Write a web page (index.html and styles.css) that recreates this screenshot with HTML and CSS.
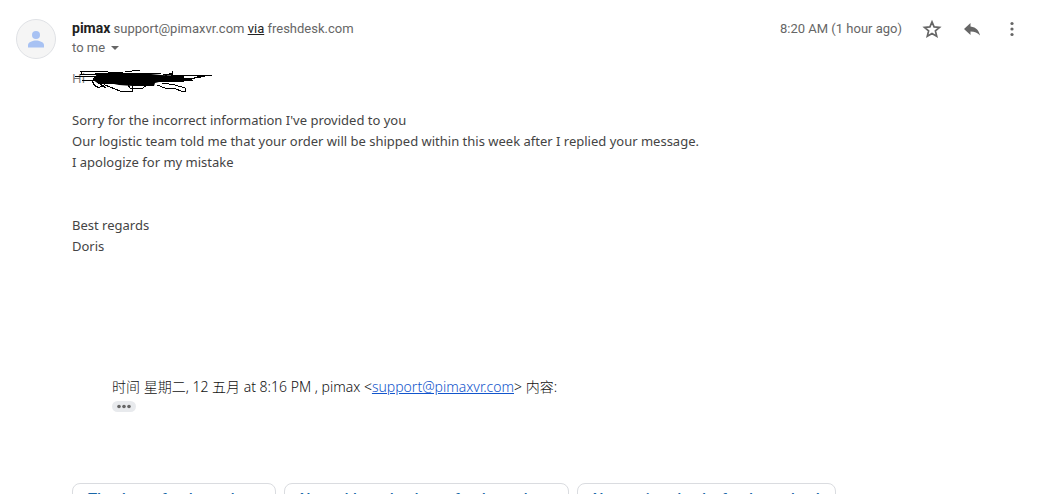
FILE: index.html
```html
<!DOCTYPE html>
<html lang="en">
<head>
<meta charset="utf-8">
<title>Message from pimax</title>
<link rel="stylesheet" href="styles.css">
</head>
<body>
<article class="message">
  <svg class="avatar" viewBox="0 0 40 40" aria-hidden="true">
    <circle cx="20" cy="20" r="19.5" fill="#f5f5f5" stroke="#dfe1e5"/>
    <circle cx="20" cy="16" r="4" fill="#a8c2f3"/>
    <path d="M12 28.500v-2.500c0-3 5-4.500 8-4.500s8 1.500 8 4.500v2.500z" fill="#a8c2f3"/>
  </svg>
  <div class="content">
    <header class="header">
      <div class="sender">
        <p class="from"><strong class="name">pimax</strong> support@pimaxvr.com <a class="via" href="#via">via</a> freshdesk.com</p>
        <button class="recipients" type="button">to me
          <svg class="caret" viewBox="0 0 8 4" aria-hidden="true"><path d="M0 0h8L4 4z"/></svg>
        </button>
      </div>
      <time class="time">8:20 AM (1 hour ago)</time>
      <div class="actions">
        <button class="action" type="button" aria-label="Star">
          <svg viewBox="0 0 20 20"><path d="M10 2.900l2.100 5 5.400.5-4.100 3.500 1.300 5.300-4.700-2.800-4.700 2.800 1.300-5.300-4.100-3.500 5.400-.5z" fill="none" stroke="#666" stroke-width="1.700"/></svg>
        </button>
        <button class="action" type="button" aria-label="Reply">
          <svg viewBox="0 0 20 20"><path d="M8.500 7.500V4L2 10l6.500 6v-3.600c4.200 0 7.200 1.200 9.500 4-1-4.500-3.500-8.200-9.500-8.900z"/></svg>
        </button>
        <button class="action" type="button" aria-label="More">
          <svg viewBox="0 0 20 20"><circle cx="10" cy="4.500" r="1.600"/><circle cx="10" cy="10" r="1.600"/><circle cx="10" cy="15.500" r="1.600"/></svg>
        </button>
      </div>
    </header>
    <div class="body">
      <p class="greeting">Hi
        <svg class="scribble" viewBox="0 0 140 24" aria-hidden="true">
          <path d="M24 5l20-1h24l20 2 23 1v5l-12 1-9-1-8 2-1 3H60l-14-1-5-1H26l-6-4z" fill="#000"/>
          <path d="M7 2.500h20l30 2M2 7.500h24M9 11.500h20M7 5.500h70M8 1.500v3M22 4.500h66M52 2.500l15-1M90 5.500l26 1.500 23-.500-13 1-9 3-17 1M80 9.500h35l13-1M75 12.500h31l14-1.500M84 16l8 3 11 1 5 2h4v-3l-10-3-13-2M32 16l15 6h12v-6M55 16l2 3h13l5-4M22 8c-5 5 0 11 5 10s7-4 3-9M24 13l9 6M92 7l6-3 1 3v-5" fill="none" stroke="#000" shape-rendering="crispEdges"/>
        </svg>
      </p>
      <p class="paragraph">Sorry for the incorrect information I've provided to you<br>Our logistic team told me that your order will be shipped within this week after I replied your message.<br>I apologize for my mistake</p>
      <p class="signature">Best regards<br>Doris</p>
      <div class="quote">
        <p>时间 星期二, 12 五月 at 8:16 PM , pimax &lt;<a class="mail" href="mailto:support@pimaxvr.com">support@pimaxvr.com</a>&gt; 内容:</p>
        <button class="trimmed" type="button" aria-label="Show trimmed content"><svg viewBox="0 0 24 11"><circle cx="7" cy="5.500" r="1.800"/><circle cx="12" cy="5.500" r="1.800"/><circle cx="17" cy="5.500" r="1.800"/></svg></button>
      </div>
    </div>
    <div class="replies">
      <button class="reply" type="button">Thank you for the update.</button>
      <button class="reply" type="button">No problem, thank you for the update.</button>
      <button class="reply" type="button">No worries, thanks for the update!</button>
    </div>
  </div>
</article>
</body>
</html>
```
FILE: styles.css
```css
* { box-sizing: border-box; }
html, body { height: 100%; }
body { margin: 0; overflow: hidden; background: #fff; color: #444; font-family: "Noto Sans", "Noto Sans CJK SC", sans-serif; font-size: 13px; line-height: 21px; }
p { margin: 0; }
button { margin: 0; padding: 0; border: 0; background: none; font: inherit; color: inherit; cursor: pointer; }
svg { display: block; fill: #666; }
.message { display: flex; gap: 16px; padding: 19px 16px 0; }
.avatar { flex: none; width: 40px; height: 40px; }
.content { flex: 1; min-width: 0; }
.header { display: flex; align-items: flex-start; font-family: Roboto, sans-serif; font-size: 13px; line-height: 20px; color: #666; }
.sender { flex: 1; line-height: 19px; }
.name { font-size: 14px; color: #222; }
.via { color: #222; }
.recipients { display: flex; align-items: center; gap: 6px; }
.caret { width: 8px; height: 4px; }
.actions { display: flex; gap: 20px; margin-left: 20px; padding-right: 2px; }
.action, .action svg { width: 20px; height: 20px; }
.body { padding-top: 11px; }
.greeting { position: relative; color: #777; }
.scribble { position: absolute; left: 1px; top: 1px; width: 140px; height: 24px; }
.paragraph { margin-top: 21px; }
.signature { margin-top: 42px; }
.quote { margin: 119px 40px 0; color: #111; font-size: 14px; font-weight: 300; }
.mail { color: #15c; }
.trimmed { display: block; margin-top: 4px; border-radius: 6px; background: #e8eaed; }
.trimmed svg { width: 24px; height: 11px; }
.replies { display: flex; gap: 8px; margin-top: 71px; }
.reply { padding: 5px 15px 7px; border: 1px solid #dadce0; border-radius: 8px; color: #1967a8; font-family: Roboto, sans-serif; font-size: 15px; font-weight: 500; line-height: 20px; white-space: nowrap; }
```
